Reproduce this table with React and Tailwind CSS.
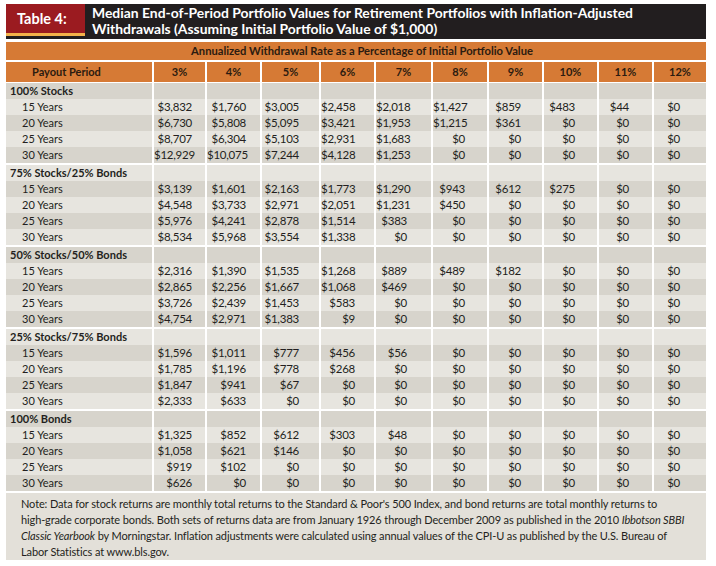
import React from "react";

const COLS = "grid grid-cols-[146px_51px_53px_57px_53px_55px_54px_53px_53px_53px_52px] gap-x-[2px]";
const PR = ["pr-[13px]", "pr-[14px]", "pr-[20px]", "pr-[19px]", "pr-[24px]", "pr-[22px]", "pr-[21px]", "pr-[22px]", "pr-[23px]", "pr-[26px]"];
const HEADS = ["3%", "4%", "5%", "6%", "7%", "8%", "9%", "10%", "11%", "12%"];

const z = (a) => [...a, ...Array(10 - a.length).fill(0)];
const GROUPS = [
  {
    label: "100% Stocks",
    rows: [
      ["15 Years", z([3832, 1760, 3005, 2458, 2018, 1427, 859, 483, 44, 0])],
      ["20 Years", z([6730, 5808, 5095, 3421, 1953, 1215, 361])],
      ["25 Years", z([8707, 6304, 5103, 2931, 1683])],
      ["30 Years", z([12929, 10075, 7244, 4128, 1253])],
    ],
  },
  {
    label: "75% Stocks/25% Bonds",
    rows: [
      ["15 Years", z([3139, 1601, 2163, 1773, 1290, 943, 612, 275])],
      ["20 Years", z([4548, 3733, 2971, 2051, 1231, 450])],
      ["25 Years", z([5976, 4241, 2878, 1514, 383])],
      ["30 Years", z([8534, 5968, 3554, 1338])],
    ],
  },
  {
    label: "50% Stocks/50% Bonds",
    rows: [
      ["15 Years", z([2316, 1390, 1535, 1268, 889, 489, 182])],
      ["20 Years", z([2865, 2256, 1667, 1068, 469])],
      ["25 Years", z([3726, 2439, 1453, 583])],
      ["30 Years", z([4754, 2971, 1383, 9])],
    ],
  },
  {
    label: "25% Stocks/75% Bonds",
    rows: [
      ["15 Years", z([1596, 1011, 777, 456, 56])],
      ["20 Years", z([1785, 1196, 778, 268])],
      ["25 Years", z([1847, 941, 67])],
      ["30 Years", z([2333, 633])],
    ],
  },
  {
    label: "100% Bonds",
    rows: [
      ["15 Years", z([1325, 852, 612, 303, 48])],
      ["20 Years", z([1058, 621, 146])],
      ["25 Years", z([919, 102])],
      ["30 Years", z([626])],
    ],
  },
];

const fmt = (n) => "$" + n.toLocaleString("en-US");

function Group({ g, gi }) {
  return (
    <div className="flex flex-col">
      {[null, ...g.rows].map((r, ri) => {
        const dark = (gi * 5 + ri) % 2 === 0;
        const bg = dark ? "bg-[#d7d4cc]" : "bg-[#e7e5df]";
        return (
          <div key={ri} className={`${COLS} h-[16px] text-[11.5px] leading-[16px] tracking-[-0.25px]`}>
            {r === null ? (
              <div className={`${bg} pl-[4px] font-bold text-[#231f20] tracking-normal text-[11px]`}>{g.label}</div>
            ) : (
              <div className={`${bg} pl-[16px] text-[#231f20] tracking-normal text-[11px]`}>{r[0]}</div>
            )}
            {Array.from({ length: 10 }).map((_, ci) => (
              <div key={ci} className={`${bg} ${PR[ci]} text-right text-[#231f20]`}>
                {r === null ? "" : fmt(r[1][ci])}
              </div>
            ))}
          </div>
        );
      })}
    </div>
  );
}

export default function App() {
  return (
    <div
      className="w-[716px] h-[566px] bg-white pt-[4px] pl-[6px]"
      style={{ fontFamily: "Lato, 'Open Sans', sans-serif" }}
    >
      <div className="w-[700px] flex flex-col">
        <div className="flex h-[35px] bg-[#221e1f]">
          <div className="w-[79px] flex flex-col">
            <div className="h-[29px] bg-[#9b1b20] flex items-center pl-[11px] text-white font-bold text-[14.5px]">
              Table 4:
            </div>
            <div className="h-[3px] bg-[#f4b24b]" />
          </div>
          <div className="pl-[7px] pt-[1px] text-white font-bold text-[13.9px] leading-[16px] whitespace-nowrap">
            Median End-of-Period Portfolio Values for Retirement Portfolios with Inflation-Adjusted
            <br />
            Withdrawals (Assuming Initial Portfolio Value of $1,000)
          </div>
        </div>
        <div className="mt-[3px] h-[18px] bg-[#d67a35] flex items-center justify-center pl-[12px] text-[11.2px] font-bold text-[#2b1b10]">
          Annualized Withdrawal Rate as a Percentage of Initial Portfolio Value
        </div>
        <div className={`${COLS} mt-[2px] h-[20px] text-[11px] font-bold text-[#2b1b10] leading-[20px]`}>
          <div className="bg-[#d67a35] pl-[26px]">Payout Period</div>
          {HEADS.map((h) => (
            <div key={h} className="bg-[#d67a35] text-center">
              {h}
            </div>
          ))}
        </div>
        <div className="mt-[1px] flex flex-col gap-y-[2px]">
          {GROUPS.map((g, gi) => (
            <Group key={gi} g={g} gi={gi} />
          ))}
        </div>
        <div className="mt-[2px] h-[67px] bg-[#e3e0d9] pl-[15px] pt-[3px] text-[11px] leading-[16px] tracking-[-0.12px] text-[#231f20] whitespace-nowrap">
          Note: Data for stock returns are monthly total returns to the Standard &amp; Poor's 500 Index, and bond returns are total monthly returns to
          <br />
          high-grade corporate bonds. Both sets of returns data are from January 1926 through December 2009 as published in the 2010{" "}
          <i>Ibbotson SBBI</i>
          <br />
          <i>Classic Yearbook</i> by Morningstar. Inflation adjustments were calculated using annual values of the CPI-U as published by the U.S. Bureau of
          <br />
          Labor Statistics at www.bls.gov.
        </div>
      </div>
    </div>
  );
}
